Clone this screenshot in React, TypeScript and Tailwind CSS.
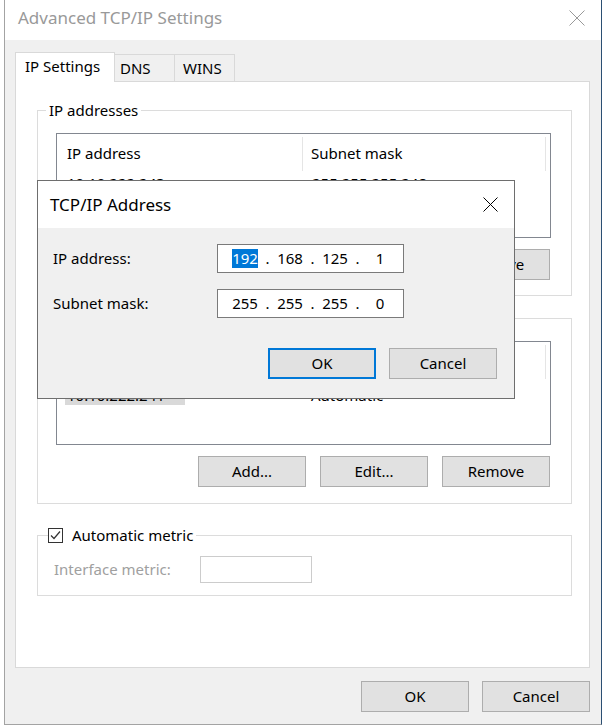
import React from "react";

type BtnProps = {
  label: string;
  primary?: boolean;
};

const WinButton: React.FC<BtnProps> = ({ label, primary }) => (
  <button
    className={
      primary
        ? "h-[31px] w-[108px] border-2 border-[#0078d7] bg-[#e1e1e1] text-[15px] text-black"
        : "h-[31px] w-[108px] border border-[#adadad] bg-[#e1e1e1] text-[15px] text-black"
    }
  >
    {label}
  </button>
);

const CloseIcon: React.FC<{ color: string; size: number }> = ({ color, size }) => (
  <svg width={size} height={size} viewBox={`0 0 ${size} ${size}`}>
    <line x1="0.5" y1="0.5" x2={size - 0.5} y2={size - 0.5} stroke={color} strokeWidth="1" />
    <line x1={size - 0.5} y1="0.5" x2="0.5" y2={size - 0.5} stroke={color} strokeWidth="1" />
  </svg>
);

interface ListProps {
  col1: string;
  col2: string;
  row1: string;
  row2: string;
  selected?: boolean;
  height: string;
}

const ListView: React.FC<ListProps> = ({ col1, col2, row1, row2, selected, height }) => (
  <div className={`ml-[18px] w-[495px] border border-[#828790] bg-white text-[15px] text-black ${height}`}>
    <div className="flex h-[37px]">
      <div className="mt-[3px] flex w-[246px] items-center border-r border-[#e5e5e5] pl-[10px] pb-[2px]">
        {col1}
      </div>
      <div className="mt-[3px] flex w-[243px] items-center border-r border-[#e5e5e5] pl-[8px] pb-[2px]">
        {col2}
      </div>
    </div>
    {selected ? (
      <div className="mt-[6px] flex h-[20px] items-center">
        <div className="ml-[8px] flex h-[20px] w-[120px] items-center bg-[#d9d9d9] pl-[2px]">{row1}</div>
        <div className="ml-[118px] pl-[8px]">{row2}</div>
      </div>
    ) : (
      <div className="flex h-[24px] items-center">
        <div className="w-[246px] pl-[10px]">{row1}</div>
        <div className="pl-[9px]">{row2}</div>
      </div>
    )}
  </div>
);

const ButtonRow: React.FC = () => (
  <div className="mt-[11px] flex justify-end gap-[14px] pr-[21px]">
    <WinButton label="Add..." />
    <WinButton label="Edit..." />
    <WinButton label="Remove" />
  </div>
);

const IpField: React.FC<{ octets: string[]; selectFirst?: boolean }> = ({ octets, selectFirst }) => (
  <div className="flex h-[29px] w-[187px] items-center border border-[#7a7a7a] bg-white pl-[12px] text-[15px] text-black">
    {octets.map((o, i) => (
      <React.Fragment key={i}>
        <div className="flex w-[30px] justify-center">
          {i === 0 && selectFirst ? (
            <span className="bg-[#0078d7] leading-[19px] text-white">{o}</span>
          ) : (
            <span>{o}</span>
          )}
        </div>
        {i < 3 && <div className="flex w-[15px] justify-center">.</div>}
      </React.Fragment>
    ))}
  </div>
);

export default function App() {
  return (
    <div className="relative h-[725px] w-[603px] overflow-hidden bg-white font-['Noto_Sans',sans-serif]">
      <div className="ml-[4px] flex h-[725px] w-[598px] flex-col border-b border-l border-r border-b-[#a3a3a3] border-l-[#a3a3a3] border-r-[#2b4f73]">
        {/* title bar */}
        <div className="flex h-[40px] items-center justify-between bg-white pb-[4px] pl-[13px] pr-[16px]">
          <span className="text-[17px] text-[#999999]">Advanced TCP/IP Settings</span>
          <CloseIcon color="#999999" size={16} />
        </div>

        <div className="flex flex-1 flex-col bg-[#f0f0f0] pl-[10px] pt-[12px]">
          {/* tabs */}
          <div className="flex h-[29px] items-end text-[15px] text-black">
            <div className="relative z-10 -mb-px flex h-[30px] w-[100px] items-center border border-b-0 border-[#d9d9d9] bg-white pl-[9px] pb-[3px]">
              IP Settings
            </div>
            <div className="flex h-[27px] w-[60px] items-center border border-b-0 border-l-0 border-[#d9d9d9] pl-[5px]">
              DNS
            </div>
            <div className="flex h-[27px] w-[60px] items-center border border-b-0 border-l-0 border-[#d9d9d9] pl-[8px]">
              WINS
            </div>
          </div>

          {/* tab panel */}
          <div className="h-[587px] w-[575px] border border-[#d9d9d9] bg-white pl-[21px] text-[15px] text-black">
            <fieldset className="mt-[18px] w-[535px] border border-[#dcdcdc] pb-[15px]">
              <legend className="ml-[8px] px-[3px] leading-[20px]">IP addresses</legend>
              <div className="mt-[13px]">
                <ListView
                  col1="IP address"
                  col2="Subnet mask"
                  row1="10.10.222.243"
                  row2="255.255.255.248"
                  height="h-[105px]"
                />
              </div>
              <ButtonRow />
            </fieldset>

            <fieldset className="mt-[12px] w-[535px] border border-[#dcdcdc] pb-[16px]">
              <legend className="ml-[8px] px-[3px] leading-[20px]">Default gateways:</legend>
              <div className="mt-[13px]">
                <ListView
                  col1="Gateway"
                  col2="Metric"
                  row1="10.10.222.241"
                  row2="Automatic"
                  selected
                  height="h-[104px]"
                />
              </div>
              <ButtonRow />
            </fieldset>

            <fieldset className="mt-[21px] w-[535px] border border-[#dcdcdc] pb-[12px]">
              <legend className="ml-[10px] flex items-center pr-[3px] leading-[20px]">
                <span className="flex h-[15px] w-[15px] items-center justify-center border border-[#333333] bg-white">
                  <svg width="11" height="11" viewBox="0 0 11 11">
                    <polyline points="1,5.5 4,8.5 10,1.5" fill="none" stroke="#333333" strokeWidth="1.2" />
                  </svg>
                </span>
                <span className="ml-[9px]">Automatic metric</span>
              </legend>
              <div className="mt-[11px] flex items-center pl-[16px]">
                <span className="w-[146px] text-[#a0a0a0]">Interface metric:</span>
                <div className="h-[27px] w-[112px] border border-[#cccccc] bg-white" />
              </div>
            </fieldset>
          </div>

          {/* dialog buttons */}
          <div className="mt-[13px] flex w-[575px] justify-end gap-[13px]">
            <WinButton label="OK" />
            <WinButton label="Cancel" />
          </div>
        </div>
      </div>

      {/* TCP/IP Address dialog (overlay) */}
      <div className="absolute left-[37px] top-[180px] flex h-[219px] w-[478px] flex-col border border-[#6e6e6e] bg-[#f0f0f0] text-black">
        <div className="flex h-[47px] items-center justify-between bg-white pl-[12px] pr-[16px]">
          <span className="text-[17px]">TCP/IP Address</span>
          <CloseIcon color="#000000" size={15} />
        </div>
        <div className="pl-[15px] pt-[16px] text-[15px]">
          <div className="flex items-center">
            <span className="w-[164px]">IP address:</span>
            <IpField octets={["192", "168", "125", "1"]} selectFirst />
          </div>
          <div className="mt-[16px] flex items-center">
            <span className="w-[164px]">Subnet mask:</span>
            <IpField octets={["255", "255", "255", "0"]} />
          </div>
          <div className="mt-[30px] flex justify-end gap-[13px] pr-[17px]">
            <WinButton label="OK" primary />
            <WinButton label="Cancel" />
          </div>
        </div>
      </div>
    </div>
  );
}
